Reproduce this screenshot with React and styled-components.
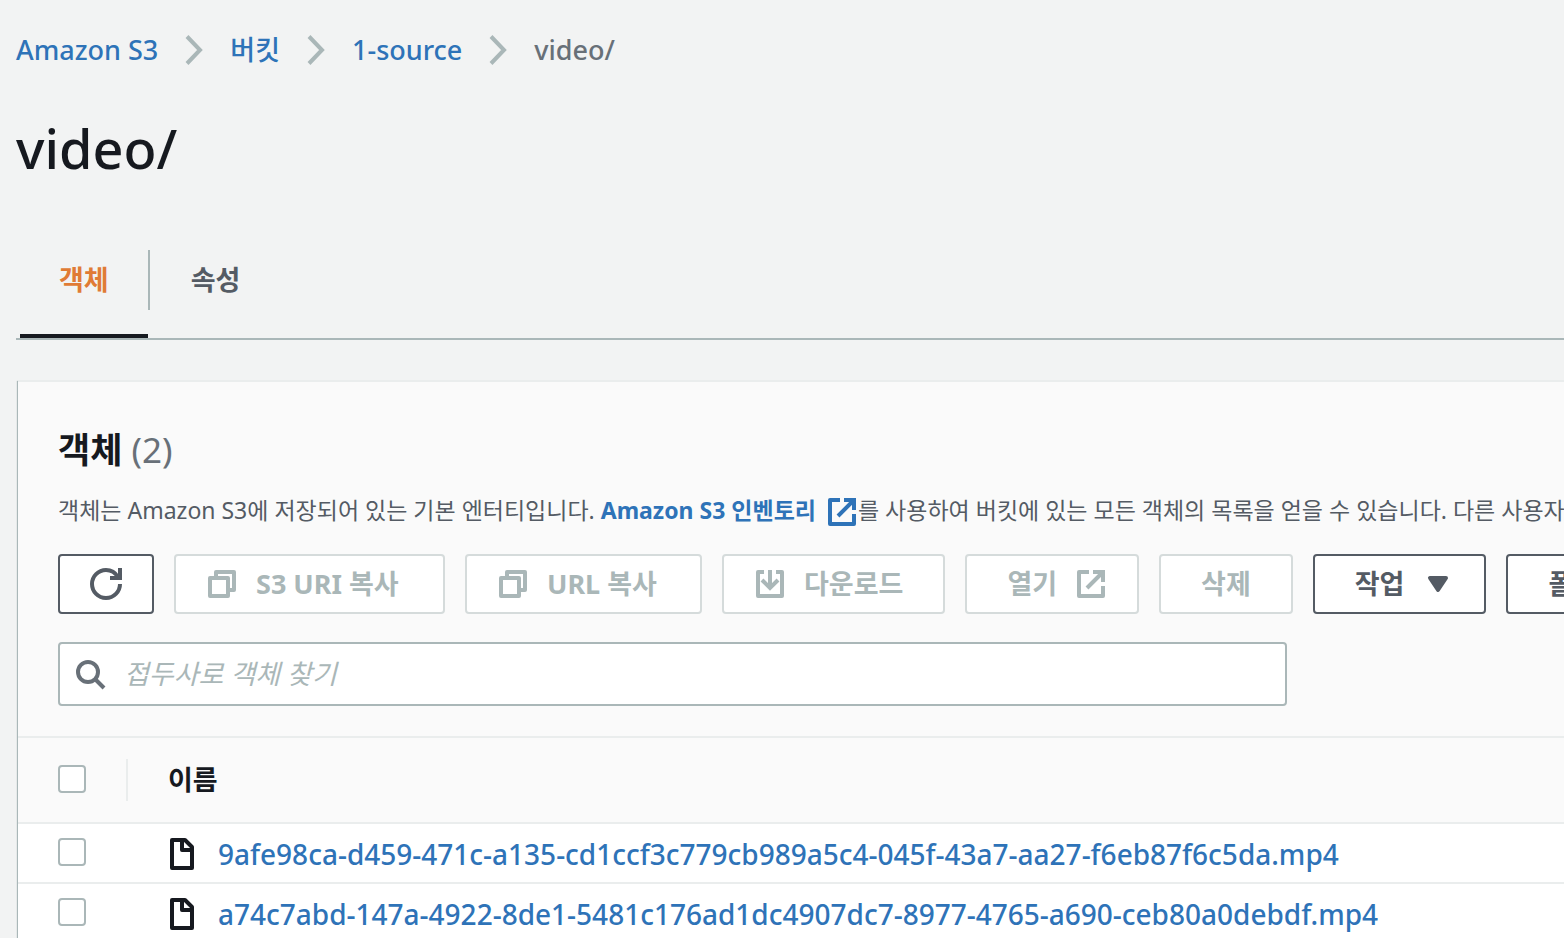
import React from 'react';
import styled, { createGlobalStyle } from 'styled-components';

const GlobalStyle = createGlobalStyle`
  * {
    box-sizing: border-box;
  }
  body {
    margin: 0;
    overflow: hidden;
    background: #f2f3f3;
    color: #16191f;
    font-family: 'Noto Sans', 'Noto Sans CJK KR', sans-serif;
    font-size: 27px;
    line-height: 40px;
  }
  button, input {
    font: inherit;
  }
`;

const Page = styled.div`
  padding: 30px 0 0 16px;
`;

const Breadcrumbs = styled.ol`
  display: flex;
  align-items: center;
  gap: 27px;
  margin: 0;
  padding: 0;
  list-style: none;
  color: #687078;
  font-weight: 500;
`;

const Crumb = styled.li`
  display: flex;
  align-items: center;
  gap: 27px;
`;

const Link = styled.a`
  color: #2e73b8;
  text-decoration: none;
  font-weight: ${props => (props.$bold ? 700 : 500)};
`;

const Title = styled.h1`
  margin: 40px 0 64px;
  font-size: 54px;
  line-height: 76px;
  font-weight: 500;
`;

const Tabs = styled.div`
  display: flex;
  align-items: flex-start;
  padding-left: 4px;
  border-bottom: 2px solid #aab7b8;
`;

const Tab = styled.button`
  height: 88px;
  padding: 0 39px 24px;
  border: 0;
  border-bottom: 4px solid ${props => (props.$active ? '#16191f' : 'transparent')};
  background: none;
  color: ${props => (props.$active ? '#e07b35' : '#545b64')};
  font-weight: 700;
`;

const TabDivider = styled.span`
  width: 2px;
  height: 60px;
  margin-right: 2px;
  background: #aab7b8;
`;

const Panel = styled.section`
  margin: 40px 0 0 2px;
  overflow: hidden;
  border-top: 2px solid #eaeded;
  background: #fafafa;
  box-shadow: -1px 1px 1px #aab7b8;
`;

const PanelHeader = styled.div`
  padding: 44px 0 30px 40px;
`;

const PanelTitle = styled.h2`
  margin: 0;
  font-size: 35px;
  line-height: 48px;
  font-weight: 700;
`;

const Counter = styled.span`
  color: #687078;
  font-weight: 400;
`;

const Description = styled.p`
  margin: 18px 0 26px;
  color: #545b64;
  font-size: 23px;
  line-height: 36px;
  white-space: nowrap;

  svg {
    margin-left: 10px;
    vertical-align: -9px;
  }
`;

const Actions = styled.div`
  display: flex;
  gap: 20px;
  margin-bottom: 28px;
`;

const Button = styled.button`
  display: flex;
  flex: none;
  align-items: center;
  gap: 18px;
  min-width: ${props => props.$minWidth || 96}px;
  height: 60px;
  padding: 0 ${props => (props.$iconRight ? 30 : 40)}px 0 ${props => (props.$iconLeft ? 30 : 40)}px;
  border: 2px solid #545b64;
  border-radius: 4px;
  background: #fff;
  color: #545b64;
  font-weight: 700;
  white-space: nowrap;

  &:disabled {
    border-color: #d5dbdb;
    color: #aab7b8;
  }
`;

const SearchBox = styled.label`
  display: flex;
  align-items: center;
  gap: 18px;
  max-width: 1229px;
  height: 64px;
  padding: 0 14px;
  border: 2px solid #aab7b8;
  border-radius: 4px;
  background: #fff;
  color: #687078;
`;

const SearchInput = styled.input`
  flex: 1;
  min-width: 0;
  padding: 0;
  border: 0;
  outline: 0;
  background: none;
  color: #16191f;

  &::placeholder {
    color: #aab7b8;
    font-style: italic;
    opacity: 1;
  }
`;

const Table = styled.table`
  width: 100%;
  border-collapse: separate;
  border-spacing: 0;
  text-align: left;

  th {
    height: 88px;
    padding: 0;
    border-top: 2px solid #eaeded;
    border-bottom: 2px solid #eaeded;
  }
  td {
    height: 60px;
    padding: 0;
    border-bottom: 2px solid #eaeded;
    background: #fff;
  }
`;

const SelectCell = styled.div`
  display: flex;
  align-items: center;
  width: 110px;
  height: 42px;
  padding: 0 0 2px 40px;
  border-right: 2px solid ${props => (props.$divider ? '#eaeded' : 'transparent')};
`;

const Checkbox = styled.input.attrs({ type: 'checkbox' })`
  appearance: none;
  width: 28px;
  height: 28px;
  margin: 0;
  border: 2px solid #aab7b8;
  border-radius: 4px;
  background: #fff;
`;

const NameHeading = styled.th`
  width: 100%;

  span {
    padding-left: 40px;
  }
`;

const FileName = styled.div`
  display: flex;
  align-items: center;
  gap: 24px;
  padding: 2px 0 0 42px;
  font-size: 28px;
  white-space: nowrap;
`;

const icons = {
  refresh: <path d="M15 8a7 7 0 1 1-7-7c2.500 0 4.700 1.300 6 3.500M10 5h5V0" />,
  copy: <path d="M2 5h9v9H2zM5 5V2h9v9h-3" strokeLinejoin="round" />,
  download: (
    <>
      <path d="M5 2H2v12h12V2h-3" strokeLinejoin="round" />
      <path d="M8 1v9M4 6l4 4 4-4" />
    </>
  ),
  external: (
    <>
      <path d="M7 2H2v12h12V9" strokeLinejoin="round" />
      <path d="M9 2h5v5M14 2l-8 8" />
    </>
  ),
  caret: <path d="M4 5h8l-4 6z" fill="currentColor" strokeLinejoin="round" />,
  search: (
    <>
      <circle cx="7" cy="7" r="5" />
      <path d="M10.500 10.500l4.500 4.500" />
    </>
  ),
};

const Icon = ({ name }) => (
  <svg width="32" height="32" viewBox="0 0 16 16" fill="none" stroke="currentColor" strokeWidth="2" aria-hidden="true">
    {icons[name]}
  </svg>
);

const Chevron = () => (
  <svg width="18" height="30" viewBox="0 0 18 30" fill="none" stroke="#aab7b8" strokeWidth="4" aria-hidden="true">
    <path d="M2 1.500L15 15 2 28.500" />
  </svg>
);

const FileIcon = () => (
  <svg width="24" height="32" viewBox="2 0 12 16" fill="none" stroke="#16191f" strokeWidth="2" strokeLinejoin="round" aria-hidden="true">
    <path d="M3 1h6.500L13 4.500V15H3zM8 1v5h5" />
  </svg>
);

const crumbs = ['Amazon S3', '버킷', '1-source'];

const files = [
  '9afe98ca-d459-471c-a135-cd1ccf3c779cb989a5c4-045f-43a7-aa27-f6eb87f6c5da.mp4',
  'a74c7abd-147a-4922-8de1-5481c176ad1dc4907dc7-8977-4765-a690-ceb80a0debdf.mp4',
];

const App = () => {
  return (
    <Page>
      <GlobalStyle />
      <nav>
        <Breadcrumbs>
          {crumbs.map(crumb => (
            <Crumb key={crumb}>
              <Link href="#">{crumb}</Link>
              <Chevron />
            </Crumb>
          ))}
          <li>video/</li>
        </Breadcrumbs>
      </nav>
      <Title>video/</Title>
      <Tabs role="tablist">
        <Tab role="tab" aria-selected="true" $active>객체</Tab>
        <TabDivider />
        <Tab role="tab" aria-selected="false">속성</Tab>
      </Tabs>
      <Panel>
        <PanelHeader>
          <PanelTitle>
            객체 <Counter>(2)</Counter>
          </PanelTitle>
          <Description>
            객체는 Amazon S3에 저장되어 있는 기본 엔터티입니다.{' '}
            <Link href="#" $bold>
              Amazon S3 인벤토리
              <Icon name="external" />
            </Link>
            를 사용하여 버킷에 있는 모든 객체의 목록을 얻을 수 있습니다. 다른 사용자가
          </Description>
          <Actions>
            <Button $iconLeft $iconRight aria-label="새로 고침">
              <Icon name="refresh" />
            </Button>
            <Button $iconLeft $minWidth={271} disabled>
              <Icon name="copy" />
              S3 URI 복사
            </Button>
            <Button $iconLeft $minWidth={237} disabled>
              <Icon name="copy" />
              URL 복사
            </Button>
            <Button $iconLeft disabled>
              <Icon name="download" />
              다운로드
            </Button>
            <Button $iconRight disabled>
              열기
              <Icon name="external" />
            </Button>
            <Button disabled>삭제</Button>
            <Button $iconRight>
              작업
              <Icon name="caret" />
            </Button>
            <Button>폴더 만들기</Button>
          </Actions>
          <SearchBox>
            <Icon name="search" />
            <SearchInput type="text" placeholder="접두사로 객체 찾기" aria-label="접두사로 객체 찾기" />
          </SearchBox>
        </PanelHeader>
        <Table>
          <thead>
            <tr>
              <th>
                <SelectCell $divider>
                  <Checkbox aria-label="모두 선택" />
                </SelectCell>
              </th>
              <NameHeading>
                <span>이름</span>
              </NameHeading>
            </tr>
          </thead>
          <tbody>
            {files.map(file => (
              <tr key={file}>
                <td>
                  <SelectCell>
                    <Checkbox aria-label={file} />
                  </SelectCell>
                </td>
                <td>
                  <FileName>
                    <FileIcon />
                    <Link href="#">{file}</Link>
                  </FileName>
                </td>
              </tr>
            ))}
          </tbody>
        </Table>
      </Panel>
    </Page>
  );
};

export default App;
